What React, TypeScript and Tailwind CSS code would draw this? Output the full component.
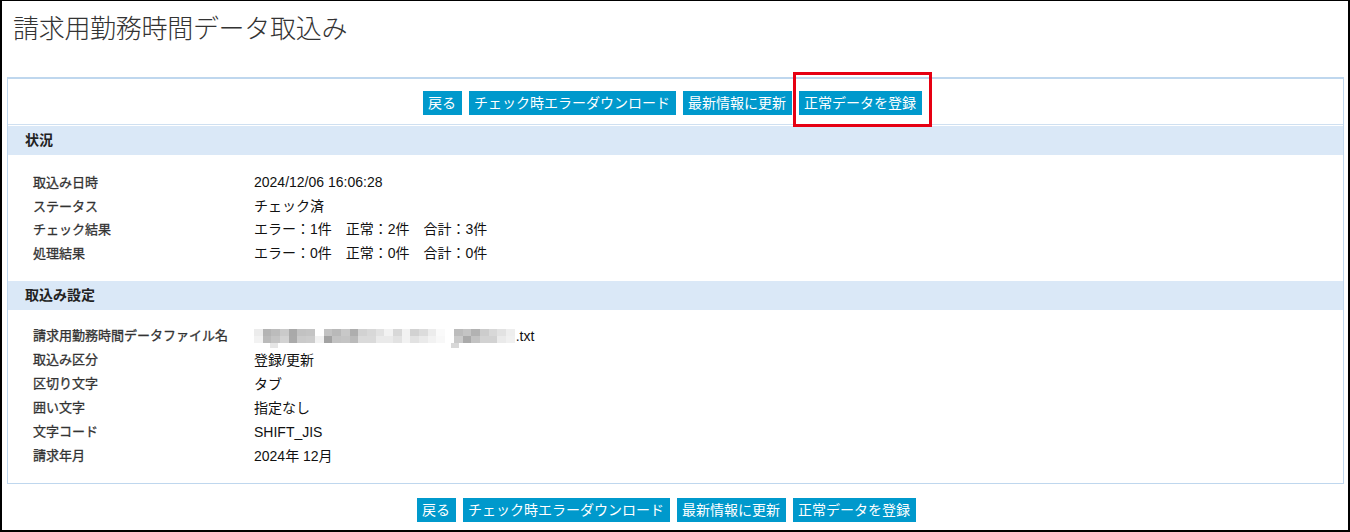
import React from 'react';

const jp = "font-['Liberation_Sans','Noto_Sans_CJK_JP',sans-serif]";

// pixelated (mosaic) file name, two rows of 8px blocks
const topRow = ['#ececec', '#b4b4b4', '#bcbcbc', '#cacaca', '#a9a9a9', '#c2c2c2', '#c4c4c4', '#ffffff', '#c2c2c2', '#b9b9b9', '#c8c8c8', '#aeaeae', '#d2d2d2', '#d8d8d8', '#e2e2e2', '#f2f2f2', '#d8d8d8', '#f2f2f2', '#d2d2d2', '#dcdcdc', '#ececec', '#fafafa', '#ffffff', '#bcbcbc', '#c4c4c4', '#b2b2b2', '#cccccc', '#d8d8d8', '#e2e2e2', '#eeeeee'];
const botRow = ['#f2f2f2', '#bababa', '#c4c4c4', '#d2d2d2', '#aaaaaa', '#cacaca', '#cccccc', '#f2f2f2', '#a2a2a2', '#c2c2c2', '#c4c4c4', '#bababa', '#dadada', '#dadada', '#eaeaea', '#eaeaea', '#e2e2e2', '#f2f2f2', '#e2e2e2', '#eaeaea', '#f2f2f2', '#f8f8f8', '#ffffff', '#cacaca', '#aaaaaa', '#c2c2c2', '#d2d2d2', '#d2d2d2', '#eaeaea', '#f0f0f0'];

function Mosaic() {
  return (
    <span className="relative inline-flex flex-col align-middle mr-[1px]">
      <span className="flex">
        {topRow.map((c, i) => (
          <span key={i} className="w-[8.7px] h-[7px]" style={{ background: c }} />
        ))}
      </span>
      <span className="flex">
        {botRow.map((c, i) => (
          <span key={i} className="w-[8.7px] h-[7px]" style={{ background: c }} />
        ))}
      </span>
      <span className="absolute left-[16px] top-[14px] w-[8px] h-[5px] bg-[#e6e6e6]" />
      <span className="absolute left-[197px] top-[14px] w-[8px] h-[5px] bg-[#d8d8d8]" />
    </span>
  );
}

function Btn({ children }: { children: React.ReactNode }) {
  return (
    <button className="h-[24px] px-[5.5px] bg-[#0099cc] text-white text-[14px] leading-[24px] whitespace-nowrap">
      {children}
    </button>
  );
}

function ButtonRow({ highlight }: { highlight?: boolean }) {
  return (
    <>
      <Btn>戻る</Btn>
      <Btn>チェック時エラーダウンロード</Btn>
      <Btn>最新情報に更新</Btn>
      <span className="relative">
        <Btn>正常データを登録</Btn>
        {highlight && (
          <span className="absolute -left-[6px] -right-[10px] -top-[19px] -bottom-[12px] border-[3px] border-[#e60012]" />
        )}
      </span>
    </>
  );
}

function SectionHeader({ title }: { title: string }) {
  return (
    <div className="h-[29px] bg-[#dae8f7] pl-[17px] flex items-center text-[14px] font-bold text-[#222]">
      {title}
    </div>
  );
}

function Row({ label, value, h = 'h-[23.5px]' }: { label: string; value: React.ReactNode; h?: string }) {
  return (
    <div className={`flex items-center ${h}`}>
      <div className="w-[221px] text-[13px] text-[#333] [-webkit-text-stroke:0.3px_#333]">{label}</div>
      <div className="text-[14px] text-[#111]">{value}</div>
    </div>
  );
}

export default function App() {
  return (
    <div className={`h-screen bg-white border-t border-x-2 border-b-2 border-black ${jp}`}>
      <h1 className="pt-[10px] pl-[11px] text-[26px] leading-[36px] text-[#333] font-light tracking-[-0.3px]">
        請求用勤務時間データ取込み
      </h1>

      <div className="mt-[30px] ml-[5px] mr-[4px] border-t-2 border-x border-b border-[#bfd7ee]">
        <div className="flex justify-center gap-[7px] pt-[12px] pb-[9px] pr-[7px] border-b border-[#cfe0f1]">
          <ButtonRow highlight />
        </div>

        <div className="pt-[1px]">
          <SectionHeader title="状況" />
        </div>
        <div className="pl-[25px] pt-[16px] pb-[16px]">
          <Row label="取込み日時" value="2024/12/06 16:06:28" />
          <Row label="ステータス" value="チェック済" />
          <Row label="チェック結果" value="エラー：1件　正常：2件　合計：3件" />
          <Row label="処理結果" value="エラー：0件　正常：0件　合計：0件" />
        </div>

        <SectionHeader title="取込み設定" />
        <div className="pl-[25px] pt-[14px] pb-[15px]">
          <Row
            h="h-[24px]"
            label="請求用勤務時間データファイル名"
            value={
              <span className="flex items-center">
                <Mosaic />
                <span>.txt</span>
              </span>
            }
          />
          <Row h="h-[24px]" label="取込み区分" value="登録/更新" />
          <Row h="h-[24px]" label="区切り文字" value="タブ" />
          <Row h="h-[24px]" label="囲い文字" value="指定なし" />
          <Row h="h-[24px]" label="文字コード" value="SHIFT_JIS" />
          <Row h="h-[24px]" label="請求年月" value="2024年 12月" />
        </div>
      </div>

      <div className="flex justify-center gap-[7px] mt-[14px] pr-[18px]">
        <ButtonRow />
      </div>
    </div>
  );
}
